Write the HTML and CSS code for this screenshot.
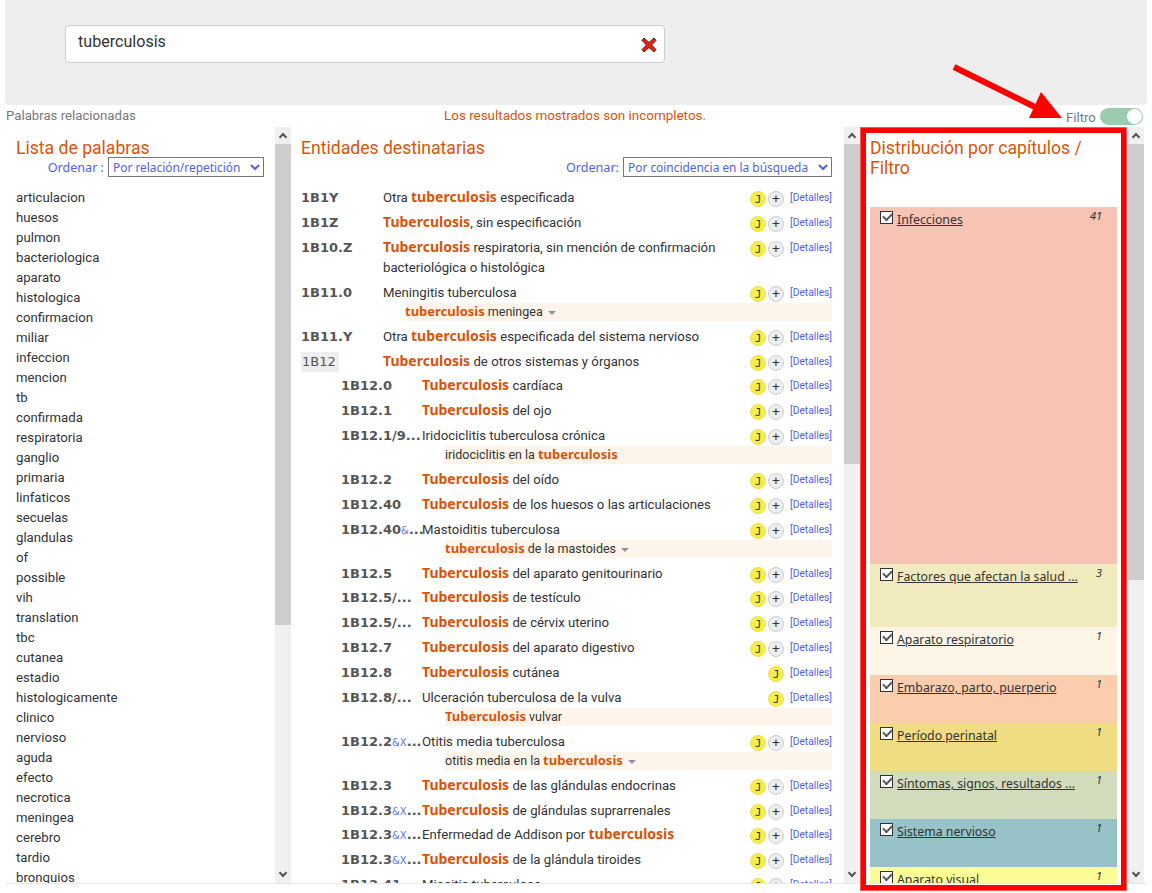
FILE: index.html
```html
<!DOCTYPE html>
<html lang="es">
<head>
    <meta charset="UTF-8">
    <title>Codificación - tuberculosis</title>
    <link rel="stylesheet" href="styles.css">
</head>
<body>
    <div class="page">
        <div class="search-panel">
            <div class="search-box">
                <span class="search-text">tuberculosis</span>
                <svg class="clear-icon" width="18" height="18" viewBox="0 0 18 18"><path d="M4 2 9 6.500 14 2l2 2.500L11.500 9 16 13.500 14 16 9 11.500 4 16l-2-2.500L6.500 9 2 4.500z" fill="#e8200c" stroke="#4a2018" stroke-width="1"/></svg>
            </div>
        </div>
        <div class="status-row">
            <span class="related">Palabras relacionadas</span>
            <span class="incomplete">Los resultados mostrados son incompletos.</span>
            <span class="filter-label">Filtro</span>
            <span class="toggle"><span class="knob"></span></span>
        </div>
        <div class="columns">
            <section class="col col-words">
                <h2>Lista de palabras</h2>
                <div class="order-row">
                    <label>Ordenar :</label>
                    <select class="order-select order-words"><option>Por relación/repetición</option></select>
                </div>
                <ul class="word-list">
                    <li>articulacion</li><li>huesos</li><li>pulmon</li><li>bacteriologica</li><li>aparato</li>
                    <li>histologica</li><li>confirmacion</li><li>miliar</li><li>infeccion</li><li>mencion</li>
                    <li>tb</li><li>confirmada</li><li>respiratoria</li><li>ganglio</li><li>primaria</li>
                    <li>linfaticos</li><li>secuelas</li><li>glandulas</li><li>of</li><li>possible</li>
                    <li>vih</li><li>translation</li><li>tbc</li><li>cutanea</li><li>estadio</li>
                    <li>histologicamente</li><li>clinico</li><li>nervioso</li><li>aguda</li><li>efecto</li>
                    <li>necrotica</li><li>meningea</li><li>cerebro</li><li>tardio</li><li>bronquios</li><li>renal</li>
                </ul>
            </section>
            <div class="scrollbar"><span class="arrow up"></span><span class="thumb thumb-words"></span><span class="track"></span><span class="arrow down"></span></div>

            <section class="col col-entities">
                <h2>Entidades destinatarias</h2>
                <div class="order-row">
                    <label>Ordenar:</label>
                    <select class="order-select order-entities"><option>Por coincidencia en la búsqueda</option></select>
                </div>
                <div class="entity-list">
                    <div class="entity"><span class="code">1B1Y</span><span class="desc">Otra <b>tuberculosis</b> especificada</span><span class="actions"><i class="badge-j">J</i><i class="badge-plus">+</i><a>[Detalles]</a></span></div>
                    <div class="entity"><span class="code">1B1Z</span><span class="desc"><b>Tuberculosis</b>, sin especificación</span><span class="actions"><i class="badge-j">J</i><i class="badge-plus">+</i><a>[Detalles]</a></span></div>
                    <div class="entity"><span class="code">1B10.Z</span><span class="desc"><b>Tuberculosis</b> respiratoria, sin mención de confirmación bacteriológica o histológica</span><span class="actions"><i class="badge-j">J</i><i class="badge-plus">+</i><a>[Detalles]</a></span></div>
                    <div class="entity"><span class="code">1B11.0</span><span class="desc">Meningitis tuberculosa</span><span class="actions"><i class="badge-j">J</i><i class="badge-plus">+</i><a>[Detalles]</a></span></div>
                    <div class="match"><b>tuberculosis</b> meningea <span class="caret"></span></div>
                    <div class="entity"><span class="code">1B11.Y</span><span class="desc">Otra <b>tuberculosis</b> especificada del sistema nervioso</span><span class="actions"><i class="badge-j">J</i><i class="badge-plus">+</i><a>[Detalles]</a></span></div>
                    <div class="entity"><span class="code code-open">1B12</span><span class="desc"><b>Tuberculosis</b> de otros sistemas y órganos</span><span class="actions"><i class="badge-j">J</i><i class="badge-plus">+</i><a>[Detalles]</a></span></div>

                    <div class="children">
                        <div class="entity"><span class="code">1B12.0</span><span class="desc"><b>Tuberculosis</b> cardíaca</span><span class="actions"><i class="badge-j">J</i><i class="badge-plus">+</i><a>[Detalles]</a></span></div>
                        <div class="entity"><span class="code">1B12.1</span><span class="desc"><b>Tuberculosis</b> del ojo</span><span class="actions"><i class="badge-j">J</i><i class="badge-plus">+</i><a>[Detalles]</a></span></div>
                        <div class="entity"><span class="code">1B12.1/9...</span><span class="desc">Iridociclitis tuberculosa crónica</span><span class="actions"><i class="badge-j">J</i><i class="badge-plus">+</i><a>[Detalles]</a></span></div>
                        <div class="match">iridociclitis en la <b>tuberculosis</b></div>
                        <div class="entity"><span class="code">1B12.2</span><span class="desc"><b>Tuberculosis</b> del oído</span><span class="actions"><i class="badge-j">J</i><i class="badge-plus">+</i><a>[Detalles]</a></span></div>
                        <div class="entity"><span class="code">1B12.40</span><span class="desc"><b>Tuberculosis</b> de los huesos o las articulaciones</span><span class="actions"><i class="badge-j">J</i><i class="badge-plus">+</i><a>[Detalles]</a></span></div>
                        <div class="entity"><span class="code">1B12.40<small>&amp;</small>...</span><span class="desc">Mastoiditis tuberculosa</span><span class="actions"><i class="badge-j">J</i><i class="badge-plus">+</i><a>[Detalles]</a></span></div>
                        <div class="match"><b>tuberculosis</b> de la mastoides <span class="caret"></span></div>
                        <div class="entity"><span class="code">1B12.5</span><span class="desc"><b>Tuberculosis</b> del aparato genitourinario</span><span class="actions"><i class="badge-j">J</i><i class="badge-plus">+</i><a>[Detalles]</a></span></div>
                        <div class="entity"><span class="code">1B12.5/...</span><span class="desc"><b>Tuberculosis</b> de testículo</span><span class="actions"><i class="badge-j">J</i><i class="badge-plus">+</i><a>[Detalles]</a></span></div>
                        <div class="entity"><span class="code">1B12.5/...</span><span class="desc"><b>Tuberculosis</b> de cérvix uterino</span><span class="actions"><i class="badge-j">J</i><i class="badge-plus">+</i><a>[Detalles]</a></span></div>
                        <div class="entity"><span class="code">1B12.7</span><span class="desc"><b>Tuberculosis</b> del aparato digestivo</span><span class="actions"><i class="badge-j">J</i><i class="badge-plus">+</i><a>[Detalles]</a></span></div>
                        <div class="entity"><span class="code">1B12.8</span><span class="desc"><b>Tuberculosis</b> cutánea</span><span class="actions"><i class="badge-j">J</i><a>[Detalles]</a></span></div>
                        <div class="entity"><span class="code">1B12.8/...</span><span class="desc">Ulceración tuberculosa de la vulva</span><span class="actions"><i class="badge-j">J</i><a>[Detalles]</a></span></div>
                        <div class="match"><b>Tuberculosis</b> vulvar</div>
                        <div class="entity"><span class="code">1B12.2<small>&amp;X</small>...</span><span class="desc">Otitis media tuberculosa</span><span class="actions"><i class="badge-j">J</i><i class="badge-plus">+</i><a>[Detalles]</a></span></div>
                        <div class="match">otitis media en la <b>tuberculosis</b> <span class="caret"></span></div>
                        <div class="entity"><span class="code">1B12.3</span><span class="desc"><b>Tuberculosis</b> de las glándulas endocrinas</span><span class="actions"><i class="badge-j">J</i><i class="badge-plus">+</i><a>[Detalles]</a></span></div>
                        <div class="entity"><span class="code">1B12.3<small>&amp;X</small>...</span><span class="desc"><b>Tuberculosis</b> de glándulas suprarrenales</span><span class="actions"><i class="badge-j">J</i><i class="badge-plus">+</i><a>[Detalles]</a></span></div>
                        <div class="entity"><span class="code">1B12.3<small>&amp;X</small>...</span><span class="desc">Enfermedad de Addison por <b>tuberculosis</b></span><span class="actions"><i class="badge-j">J</i><i class="badge-plus">+</i><a>[Detalles]</a></span></div>
                        <div class="entity"><span class="code">1B12.3<small>&amp;X</small>...</span><span class="desc"><b>Tuberculosis</b> de la glándula tiroides</span><span class="actions"><i class="badge-j">J</i><i class="badge-plus">+</i><a>[Detalles]</a></span></div>
                        <div class="entity"><span class="code">1B12.41</span><span class="desc">Miositis tuberculosa</span><span class="actions"><i class="badge-j">J</i><i class="badge-plus">+</i><a>[Detalles]</a></span></div>
                    </div>
                </div>
            </section>
            <div class="scrollbar"><span class="arrow up"></span><span class="thumb thumb-entities"></span><span class="track"></span><span class="arrow down"></span></div>

            <section class="col col-chapters">
                <h2>Distribución por capítulos / Filtro</h2>
                <div class="chapter ch-infections"><span class="check"></span><a>Infecciones</a><em>41</em></div>
                <div class="chapter ch-factors"><span class="check"></span><a>Factores que afectan la salud ...</a><em>3</em></div>
                <div class="chapter ch-short ch-resp"><span class="check"></span><a>Aparato respiratorio</a><em>1</em></div>
                <div class="chapter ch-short ch-preg"><span class="check"></span><a>Embarazo, parto, puerperio</a><em>1</em></div>
                <div class="chapter ch-short ch-peri"><span class="check"></span><a>Período perinatal</a><em>1</em></div>
                <div class="chapter ch-short ch-sympt"><span class="check"></span><a>Síntomas, signos, resultados ...</a><em>1</em></div>
                <div class="chapter ch-short ch-nerv"><span class="check"></span><a>Sistema nervioso</a><em>1</em></div>
                <div class="chapter ch-short ch-vis"><span class="check"></span><a>Aparato visual</a><em>1</em></div>
            </section>
            <div class="scrollbar"><span class="arrow up"></span><span class="thumb thumb-chapters"></span><span class="track"></span><span class="arrow down"></span></div>
        </div>
    </div>

    <!-- annotation drawn on top of the screenshot -->
    <div class="red-frame"></div>
    <svg class="red-arrow" width="120" height="60" viewBox="0 0 120 60"><path d="M3 3 90 46" stroke="#f00" stroke-width="6" fill="none"/><path d="M90 28 78 54h33z" fill="#f00"/></svg>
</body>
</html>
```

FILE: styles.css
```css
body {
    font-family: Roboto, sans-serif;
    font-size: 13.200px;
    color: #333;
    margin: 0;
    padding: 0;
    background-color: #fff;
    overflow: hidden;
}
.page {
    width: 1147px;
    height: 893px;
}
.search-panel {
    margin-left: 5px;
    height: 105px;
    padding: 25px 0 0 60px;
    box-sizing: border-box;
    background: #eee;
    border-radius: 0 0 4px 4px;
}
.search-box {
    width: 600px;
    height: 38px;
    box-sizing: border-box;
    padding: 0 6px 0 12px;
    display: flex;
    align-items: center;
    justify-content: space-between;
    background: #fff;
    border: 1px solid #ccc;
    border-radius: 4px;
}
.search-text {
    font-size: 16.100px;
    margin-top: -6px;
}
.clear-icon {
    margin-top: 2px;
}
.status-row {
    height: 22px;
    display: flex;
    align-items: center;
    margin-left: 6px;
    color: #777;
}
.related {
    width: 438px;
    margin-top: -2px;
}
.incomplete {
    width: 622px;
    margin-top: -1px;
    font-size: 13.430px;
    color: #d9540a;
}
.filter-label {
    color: #6d7b8c;
    width: 34px;
    margin-top: 2px;
}
.toggle {
    width: 43px;
    height: 17px;
    margin-top: 1px;
    border-radius: 9px;
    background: #9ccbb0;
    display: flex;
    justify-content: flex-end;
    align-items: center;
    padding-right: 1px;
    box-sizing: border-box;
}
.knob {
    width: 15px;
    height: 15px;
    border-radius: 50%;
    background: #fff;
}
.columns {
    display: flex;
    height: 756px;
    margin-left: 6px;
    border-bottom: 1px solid #e8e8e8;
}
.col {
    height: 756px;
    overflow: hidden;
    box-sizing: border-box;
}
.col h2 {
    margin: 0;
    font-size: 17.600px;
    font-weight: normal;
    line-height: 20px;
    color: #d9540a;
}
.col-words {
    width: 269px;
    padding: 11px 11px 0 10px;
}
.col-entities {
    width: 553px;
    padding: 11px 12px 0 10px;
}
.col-chapters {
    width: 268px;
    padding: 11px 11px 0 10px;
}
.scrollbar {
    width: 16px;
    display: flex;
    flex-direction: column;
    background: #f0f0f0;
}
.arrow {
    height: 17px;
    position: relative;
}
.arrow::after {
    content: "";
    position: absolute;
    left: 5px;
    width: 6px;
    height: 6px;
    border: solid #555;
    border-width: 2px 0 0 2px;
    box-sizing: border-box;
    transform: rotate(45deg);
}
.arrow.up::after {
    top: 7px;
}
.arrow.down::after {
    top: 4px;
    transform: rotate(225deg);
}
.thumb {
    background: #cdcdcd;
}
.thumb-words {
    height: 481px;
}
.thumb-entities {
    height: 320px;
}
.thumb-chapters {
    height: 436px;
}
.track {
    flex: 1;
}
.order-row {
    display: flex;
    justify-content: flex-end;
    align-items: center;
    gap: 4px;
    height: 18px;
    font-family: "Noto Sans", sans-serif;
    font-size: 12.600px;
    color: #4f63e0;
}
.order-select {
    font-family: "Noto Sans", sans-serif;
    font-size: 11.900px;
    color: #4f63e0;
    height: 20px;
    padding: 0;
    background: #fff;
    border: 1px solid #777;
}
.order-words {
    width: 156px;
}
.order-entities {
    width: 209px;
}
.word-list {
    list-style: none;
    margin: 12px 0 0;
    padding: 0;
}
.word-list li {
    line-height: 20px;
}
.entity-list {
    margin-top: 10px;
}
.entity {
    display: flex;
    line-height: 20px;
    padding: 2.400px 0;
}
.code {
    width: 82px;
    flex: none;
    font-family: "DejaVu Sans", sans-serif;
    font-weight: bold;
    font-size: 13px;
    color: #555;
    white-space: nowrap;
}
.code small {
    font-size: 10px;
    line-height: 1;
    font-weight: normal;
    color: #5577dd;
}
.code-open {
    flex: none;
    width: 38px;
    margin-right: 44px;
    padding-left: 1px;
    box-sizing: border-box;
    font-weight: normal;
    background: #eee;
}
.desc {
    flex: 1;
}
.desc b {
    font-family: "Noto Sans", sans-serif;
    font-size: 14px;
    line-height: 1;
    color: #d9540a;
}
.actions {
    flex: none;
    width: 80px;
    display: flex;
    justify-content: flex-end;
    align-items: flex-start;
    gap: 2px;
    margin-top: 3px;
}
.actions a {
    font-size: 10.200px;
    line-height: 14px;
    color: #4f63e0;
    margin-left: 4px;
}
.badge-j,
.badge-plus {
    width: 16px;
    height: 16px;
    flex: none;
    box-sizing: border-box;
    border-radius: 50%;
    font-family: "DejaVu Sans Mono", monospace;
    font-style: normal;
    font-size: 11px;
    line-height: 15px;
    text-align: center;
}
.badge-j {
    background: #f5ee4a;
    border: 1px solid #eee04a;
}
.badge-plus {
    background: #eee;
    border: 1px solid #ccc;
    font-size: 13px;
    line-height: 14px;
}
.match {
    margin: -2.400px 0 3.700px 104px;
    height: 18px;
    line-height: 18px;
    font-size: 12.500px;
    background: #fdf5e9;
}
.match b {
    font-family: "Noto Sans", sans-serif;
    font-size: 13px;
    line-height: 1;
    color: #d9540a;
}
.caret {
    display: inline-block;
    margin-left: 2px;
    vertical-align: 1px;
    border: 4px solid transparent;
    border-top-color: #8a93a5;
    border-bottom: 0;
}
.children {
    padding-left: 40px;
}
.children .code {
    width: 81px;
}
.children .match {
    margin-left: 104px;
}
.col-chapters h2 {
    height: 69px;
}
.chapter {
    position: relative;
    display: flex;
    align-items: flex-start;
    width: 247px;
    height: 48px;
    box-sizing: border-box;
    padding: 4px 0 0 10px;
    font-family: "Noto Sans", sans-serif;
    font-size: 12.300px;
    line-height: 18px;
}
.chapter a {
    text-decoration: underline;
    margin-left: 4px;
}
.chapter em {
    position: absolute;
    top: 0;
    right: 15px;
    font-size: 11px;
}
.check {
    position: relative;
    width: 13px;
    height: 13px;
    flex: none;
    box-sizing: border-box;
    border: 1px solid #333;
    background: #fff;
}
.check::after {
    content: "";
    position: absolute;
    left: 2px;
    top: 1px;
    width: 7px;
    height: 4px;
    border: solid #555;
    border-width: 0 0 2px 2px;
    transform: rotate(-45deg);
}
.ch-infections {
    height: 357px;
    background: #f6c3b5;
}
.ch-factors {
    height: 63px;
    background: #f1eabf;
}
.ch-resp {
    background: #fdf5e6;
}
.ch-preg {
    background: #f9cdae;
}
.ch-peri {
    background: #f0dc82;
}
.ch-sympt {
    background: #d2dcbc;
}
.ch-nerv {
    background: #96c2c8;
}
.ch-vis {
    background: #fdfd96;
}
.red-frame {
    position: absolute;
    left: 861px;
    top: 128px;
    width: 265px;
    height: 762px;
    box-sizing: border-box;
    border: 5px solid #f00;
    box-shadow: 0 0 0 1px #f55;
    pointer-events: none;
}
.red-arrow {
    position: absolute;
    left: 951px;
    top: 64px;
}
```
